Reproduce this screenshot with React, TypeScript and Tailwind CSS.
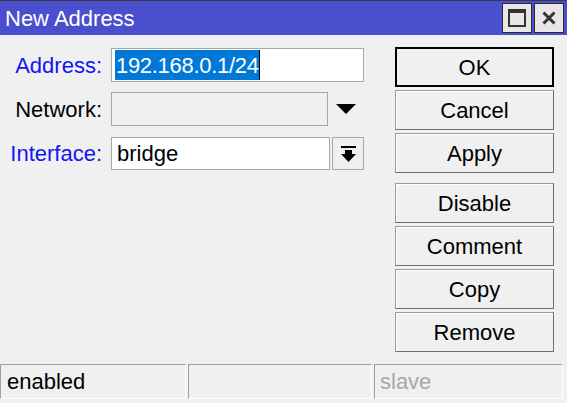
import type { ReactNode } from "react";

const font = { fontFamily: '"Liberation Sans", Arial, sans-serif' };

function Btn({ children, primary }: { children: ReactNode; primary?: boolean }) {
  return (
    <div
      className={
        primary
          ? "flex h-[40px] items-center justify-center border-2 border-black text-[22px] text-black"
          : "flex h-[40px] items-center justify-center border border-[#9a9a9a] border-b-[#6e6e6e] border-r-[#6e6e6e] text-[22px] text-black shadow-[inset_1px_1px_0_#ffffff]"
      }
    >
      {children}
    </div>
  );
}

function Label({ children, blue }: { children: ReactNode; blue?: boolean }) {
  return (
    <div className={`w-[102px] shrink-0 text-right text-[22px] ${blue ? "text-[#1414f2]" : "text-black"}`}>
      {children}
    </div>
  );
}

export default function App() {
  return (
    <div className="flex h-[403px] w-[567px] flex-col bg-[#f0f0f0]" style={font}>
      <div className="flex h-[35px] shrink-0 items-center border-t border-[#3a3a3a] bg-[#4a4fcd] pl-[5px] pr-[3px]">
        <span className="text-[22px] text-white">New Address</span>
        <div className="ml-auto flex gap-[2px]">
          <div className="flex h-[30px] w-[30px] items-center justify-center border border-[#2a2a2a] bg-[#e9e6e9]">
            <div className="h-[18px] w-[18px] border-2 border-t-[4px] border-[#333333]" />
          </div>
          <div className="flex h-[30px] w-[30px] items-center justify-center border border-[#2a2a2a] bg-[#e9e6e9]">
            <svg width="14" height="14" viewBox="0 0 14 14">
              <path d="M1.5 1.5 L12.5 12.5 M12.5 1.5 L1.5 12.5" stroke="#333333" strokeWidth="3" />
            </svg>
          </div>
        </div>
      </div>

      <div className="flex flex-1">
        <div className="flex flex-col pt-[13px]">
          <div className="flex items-center">
            <Label blue>Address:</Label>
            <div className="ml-[9px] flex h-[34px] w-[253px] items-center border border-[#a8a8a8] bg-white pl-[3px]">
              <span className="flex h-[30px] items-center bg-[#0078d7] pl-[1px] text-[22px] tracking-[-0.3px] text-white">
                192.168.0.1/24
              </span>
              <span className="h-[30px] w-px bg-black" />
            </div>
          </div>
          <div className="mt-[10px] flex items-center">
            <Label>Network:</Label>
            <div className="ml-[9px] h-[34px] w-[217px] border border-[#a8a8a8] bg-[#f0f0f0]" />
            <svg className="ml-[8px]" width="20" height="10" viewBox="0 0 20 10">
              <path d="M0 0 H20 L10 10 Z" fill="#000000" />
            </svg>
          </div>
          <div className="mt-[11px] flex items-center">
            <Label blue>Interface:</Label>
            <div className="ml-[9px] flex h-[33px] w-[219px] items-center border border-[#a8a8a8] bg-white pl-[5px] text-[22px] text-black">
              bridge
            </div>
            <div className="ml-[2px] flex h-[33px] w-[32px] items-center justify-center border border-[#a8a8a8]">
              <svg width="15" height="16" viewBox="0 0 15 16">
                <rect x="0" y="0" width="15" height="2" fill="#000000" />
                <path d="M4 4 H11 V8 H15 L7.5 16 L0 8 H4 Z" fill="#000000" />
              </svg>
            </div>
          </div>
        </div>

        <div className="ml-auto mr-[13px] flex w-[159px] flex-col pt-[12px]">
          <div className="flex flex-col gap-[3px]">
            <Btn primary>OK</Btn>
            <Btn>Cancel</Btn>
            <Btn>Apply</Btn>
          </div>
          <div className="mt-[10px] flex flex-col gap-[3px]">
            <Btn>Disable</Btn>
            <Btn>Comment</Btn>
            <Btn>Copy</Btn>
            <Btn>Remove</Btn>
          </div>
        </div>
      </div>

      <div className="flex h-[39px] shrink-0 gap-[2px] pb-[4px] pr-[4px]">
        <div className="flex w-[186px] items-center border border-[#a0a0a0] border-b-white border-r-white pl-[6px] text-[22px] text-black">
          enabled
        </div>
        <div className="w-[184px] border border-[#a0a0a0] border-b-white border-r-white" />
        <div className="flex flex-1 items-center border border-[#a0a0a0] border-b-white border-r-white pl-[5px] text-[22px] text-[#a8a8a8]">
          slave
        </div>
      </div>
    </div>
  );
}
